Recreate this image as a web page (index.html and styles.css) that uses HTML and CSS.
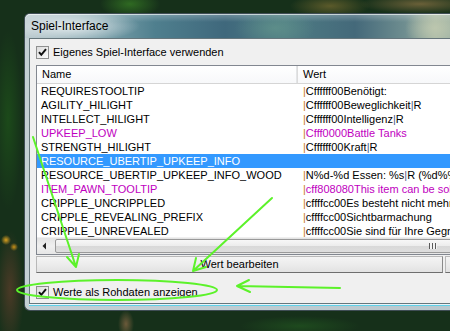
FILE: index.html
```html
<!DOCTYPE html>
<html lang="de">
<head>
<meta charset="utf-8">
<title>Spiel-Interface</title>
<link rel="stylesheet" href="styles.css">
</head>
<body>
<div class="window">
  <div class="titlebar"><span class="title">Spiel-Interface</span></div>
  <div class="client">
    <label class="chk-row">
      <span class="chk"><svg viewBox="0 0 13 13" width="13" height="13"><path d="M3 6.2 L5.3 8.8 L10 3.2" fill="none" stroke="#111" stroke-width="2"/></svg></span>
      <span>Eigenes Spiel-Interface verwenden</span>
    </label>
    <div class="list">
      <div class="head">
        <div class="col-name">Name</div>
        <div class="col-val">Wert</div>
      </div>
      <div class="rows">
        <div class="row"><div class="col-name">REQUIRESTOOLTIP</div><div class="col-val"><span class="p">|</span>Cffffff00Benötigt:</div></div>
        <div class="row"><div class="col-name">AGILITY_HILIGHT</div><div class="col-val"><span class="p">|</span>Cffffff00Beweglichkeit<span class="p2">|</span>R</div></div>
        <div class="row"><div class="col-name">INTELLECT_HILIGHT</div><div class="col-val"><span class="p">|</span>Cffffff00Intelligenz<span class="p2">|</span>R</div></div>
        <div class="row mag"><div class="col-name">UPKEEP_LOW</div><div class="col-val"><span class="p">|</span>Cfff0000Battle Tanks</div></div>
        <div class="row"><div class="col-name">STRENGTH_HILIGHT</div><div class="col-val"><span class="p">|</span>Cffffff00Kraft<span class="p2">|</span>R</div></div>
        <div class="row sel"><div class="col-name">RESOURCE_UBERTIP_UPKEEP_INFO</div><div class="col-val"></div></div>
        <div class="row"><div class="col-name">RESOURCE_UBERTIP_UPKEEP_INFO_WOOD</div><div class="col-val"><span class="p">|</span>N%d-%d Essen: %s<span class="p2">|</span>R (%d%% Gold)</div></div>
        <div class="row mag"><div class="col-name">ITEM_PAWN_TOOLTIP</div><div class="col-val"><span class="p">|</span>cff808080This item can be sold</div></div>
        <div class="row"><div class="col-name">CRIPPLE_UNCRIPPLED</div><div class="col-val"><span class="p">|</span>cffffcc00Es besteht nicht mehr</div></div>
        <div class="row"><div class="col-name">CRIPPLE_REVEALING_PREFIX</div><div class="col-val"><span class="p">|</span>cffffcc00Sichtbarmachung</div></div>
        <div class="row"><div class="col-name">CRIPPLE_UNREVEALED</div><div class="col-val"><span class="p">|</span>cffffcc00Sie sind für Ihre Gegner</div></div>
      </div>
      <div class="hscroll">
        <div class="arrow"><svg viewBox="0 0 16 16" width="16" height="16"><path d="M9 4.5 L5.5 8 L9 11.5 Z" fill="#222"/></svg></div>
        <div class="thumb"><span class="grip"></span></div>
      </div>
    </div>
    <div class="btn-row">
      <div class="btn">Wert bearbeiten</div>
      <div class="btn btn2"></div>
    </div>
    <label class="chk-row bottom">
      <span class="chk"><svg viewBox="0 0 13 13" width="13" height="13"><path d="M3 6.2 L5.3 8.8 L10 3.2" fill="none" stroke="#111" stroke-width="2"/></svg></span>
      <span>Werte als Rohdaten anzeigen</span>
    </label>
  </div>
</div>
<svg class="marks" viewBox="0 0 450 331" width="450" height="331">
  <g fill="none" stroke="#5cf22a" stroke-width="2" stroke-linecap="round">
    <ellipse cx="117" cy="290" rx="100" ry="10"/>
    <path d="M340 288 L237 286 M237 286 L249 280 M237 286 L250 292"/>
    <path d="M33 137 L76 267 M76 267 L67 257 M76 267 L79 254"/>
    <path d="M272 198 L193 271 M193 271 L196 258 M193 271 L206 267"/>
  </g>
</svg>
</body>
</html>
```
FILE: styles.css
```css
html, body {
  margin: 0;
  padding: 0;
}
body {
  width: 450px;
  height: 331px;
  overflow: hidden;
  position: relative;
  font-family: "Liberation Sans", Arial, sans-serif;
  font-size: 11px;
  color: #000;
  background:
    radial-gradient(ellipse 30px 14px at 130px 4px, #2f6a22 0%, rgba(47,106,34,0) 100%),
    radial-gradient(ellipse 40px 12px at 330px 6px, #5b5a2a 0%, rgba(91,90,42,0) 100%),
    radial-gradient(ellipse 60px 10px at 420px 4px, #6a6038 0%, rgba(106,96,56,0) 100%),
    radial-gradient(circle 5px at 6px 240px, #d9a020 0%, rgba(217,160,32,0) 100%),
    radial-gradient(circle 4px at 14px 247px, #c89018 0%, rgba(200,144,24,0) 100%),
    radial-gradient(ellipse 14px 60px at 10px 290px, #4a3a26 0%, rgba(74,58,38,0) 100%),
    radial-gradient(ellipse 14px 90px at 8px 120px, #1c4a1a 0%, rgba(28,74,26,0) 100%),
    radial-gradient(ellipse 8px 14px at 126px 324px, #6b5a3a 0%, rgba(107,90,58,0) 100%),
    radial-gradient(ellipse 60px 10px at 300px 326px, #1e4a1e 0%, rgba(30,74,30,0) 100%),
    #16301a;
}
.window {
  margin: 13px 0 0 24px;
  width: 480px;
  border: 1px solid #3f4d55;
  border-right: none;
  border-radius: 6px 0 0 6px;
  padding: 0 0 6px 4px;
  background: linear-gradient(to right, #c3cfd4 0px, #b7c7cd 100%);
}
.titlebar {
  height: 24px;
  margin-left: -4px;
  padding-left: 6px;
  border-radius: 5px 0 0 0;
  background:
    radial-gradient(ellipse 70px 16px at 45px 12px, rgba(235,240,242,0.95) 0%, rgba(235,240,242,0) 100%),
    radial-gradient(ellipse 30px 20px at 410px 14px, rgba(190,200,175,0.9) 0%, rgba(190,200,175,0) 100%),
    radial-gradient(ellipse 40px 20px at 250px 14px, rgba(100,150,140,0.7) 0%, rgba(100,150,140,0) 100%),
    linear-gradient(to bottom, rgba(255,255,255,0.25) 0px, rgba(255,255,255,0) 8px),
    linear-gradient(to right, #b9c8cd 0px, #7aa0aa 80px, #4f7f8e 130px, #3f687c 200px, #4e7c84 260px, #44697a 330px, #6f8e90 380px, #a8b8a6 410px, #8aa4a0 450px);
  box-shadow: inset 0 1px 0 rgba(255,255,255,0.6);
}
.title {
  display: block;
  font-size: 12px;
  line-height: 24px;
  color: #000;
}
.client {
  height: 264px;
  border: 1px solid #66767c;
  border-right: none;
  background: #f0f0f0;
  display: flex;
  flex-direction: column;
  box-shadow: 0 1px 0 #e8f4f8, 0 2px 0 #5fd0e8;
}
.chk-row {
  display: flex;
  align-items: center;
  gap: 4px;
  margin: 7px 0 0 6px;
  height: 13px;
  line-height: 13px;
}
.chk {
  width: 11px;
  height: 11px;
  border: 1px solid #8e8f8f;
  background: linear-gradient(135deg, #dcdcdc, #fbfbfb);
  position: relative;
  flex: none;
}
.chk svg {
  position: absolute;
  left: -1px;
  top: -1px;
}
.list {
  margin: 6px 0 0 6px;
  height: 188px;
  border: 1px solid #828790;
  border-right: none;
  background: #fff;
  display: flex;
  flex-direction: column;
  overflow: hidden;
}
.head {
  height: 17px;
  flex: none;
  display: flex;
  border-bottom: 1px solid #d5d5d5;
  background: linear-gradient(to bottom, #ffffff, #f7f8fa);
  line-height: 17px;
}
.head .col-name {
  padding-left: 5px;
  border-right: 1px solid #e3e5e7;
  box-shadow: 1px 0 0 #dcdcdc;
}
.col-name {
  width: 260px;
  flex: none;
  box-sizing: border-box;
  padding-left: 4px;
  white-space: nowrap;
  overflow: hidden;
}
.col-val {
  flex: none;
  width: 300px;
  padding-left: 6px;
  white-space: nowrap;
}
.rows {
  height: 153px;
  flex: none;
  overflow: hidden;
}
.row {
  height: 14px;
  line-height: 14px;
  display: flex;
}
.row.mag {
  color: #c000c0;
}
.row.sel {
  background: #3399ff;
  color: #fff;
}
.p {
  color: #c9772a;
}
.p2 {
  color: #4a5a8a;
}
.hscroll {
  height: 17px;
  flex: none;
  display: flex;
  background: linear-gradient(to bottom, #e3e3e3, #f0f0f0 50%, #e6e6e6);
  border-top: 1px solid #efefef;
  box-sizing: border-box;
}
.arrow {
  width: 16px;
  height: 16px;
  flex: none;
}
.thumb {
  flex: none;
  width: 430px;
  height: 14px;
  margin: 1px 0 0 2px;
  border: 1px solid #9a9a9a;
  border-radius: 2px;
  box-sizing: border-box;
  background: linear-gradient(to bottom, #f7f7f7, #ececec 50%, #d8d8d8 51%, #dedede);
  position: relative;
}
.grip {
  position: absolute;
  left: 373px;
  top: 3px;
  width: 8px;
  height: 6px;
  background: repeating-linear-gradient(to right, #5a5a5a 0 1px, #f4f4f4 1px 3px);
}
.btn-row {
  display: flex;
  gap: 2px;
  margin: 1px 0 0 6px;
  height: 17px;
}
.btn {
  width: 407px;
  flex: none;
  box-sizing: border-box;
  border: 1px solid #b8b8b8;
  border-bottom-color: #6e6e6e;
  border-right-color: #8a8a8a;
  background: linear-gradient(to bottom, #f4f4f4, #ececec 50%, #e2e2e2);
  text-align: center;
  line-height: 15px;
}
.btn2 {
  width: 60px;
}
.chk-row.bottom {
  margin-top: 13px;
}
.marks {
  position: absolute;
  left: 0;
  top: 0;
  pointer-events: none;
}
```
